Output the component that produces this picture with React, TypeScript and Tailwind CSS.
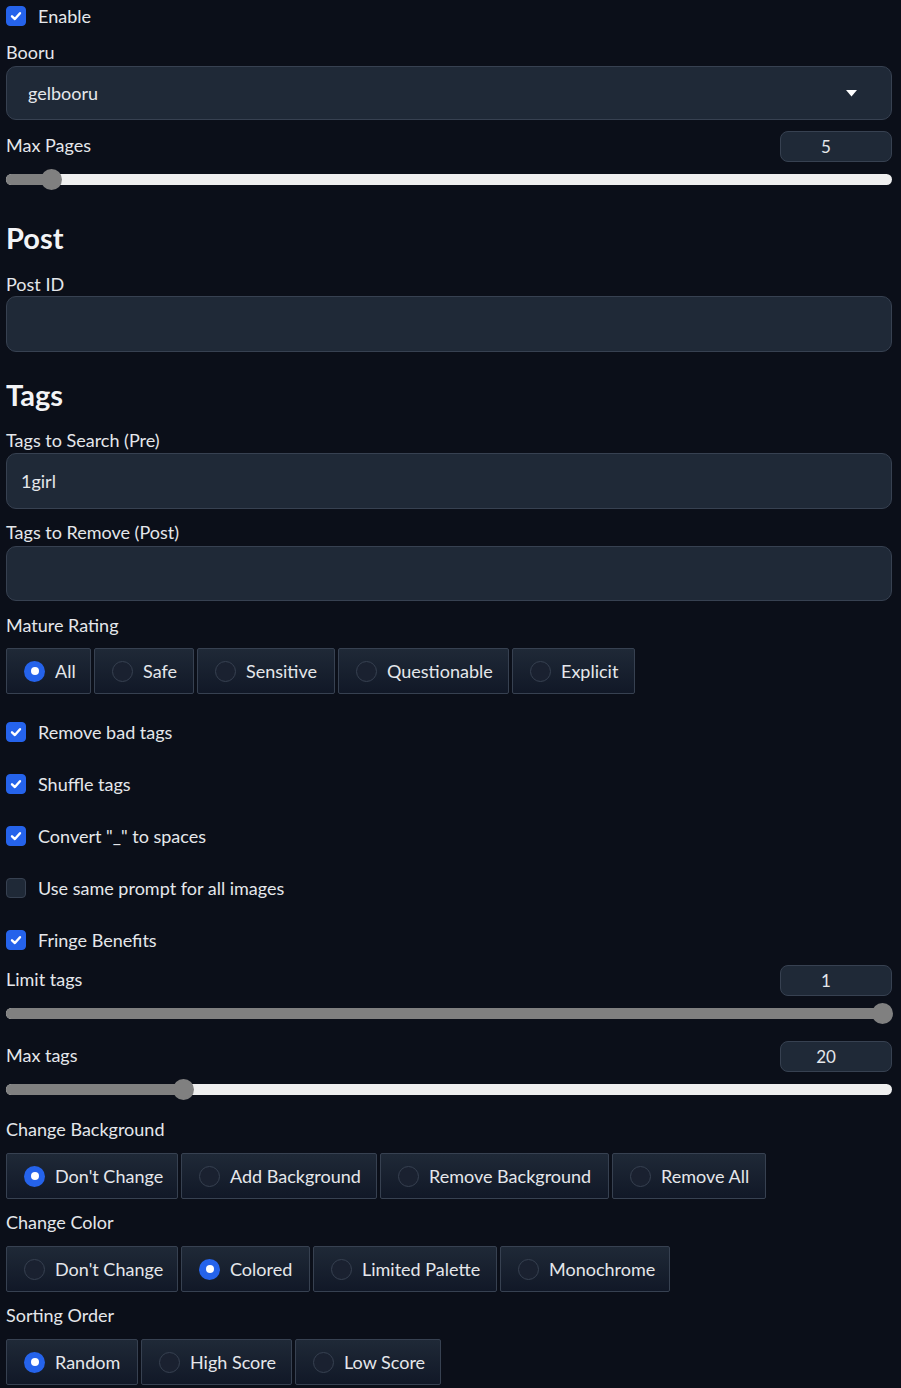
import React from "react";

const font = { fontFamily: "Lato, 'Noto Sans', sans-serif" };

function Check({ checked, label, className = "" }: { checked: boolean; label: string; className?: string }) {
  return (
    <div className={"flex items-center " + className}>
      <div
        className={
          "w-[20px] h-[20px] rounded-[4px] border flex items-center justify-center " +
          (checked ? "bg-[#2563eb] border-[#2563eb]" : "bg-[#1f2937] border-[#374151]")
        }
      >
        {checked && (
          <svg width="14" height="14" viewBox="0 0 14 14">
            <path d="M3 7.3 L5.9 10 L11 4.2" fill="none" stroke="white" strokeWidth="2.4" strokeLinecap="round" strokeLinejoin="round" />
          </svg>
        )}
      </div>
      <span className="ml-[12px] text-[18px] text-[#e5e7eb] leading-[24px]">{label}</span>
    </div>
  );
}

function Label({ children, className = "" }: { children: React.ReactNode; className?: string }) {
  return <div className={"text-[18px] leading-[24px] text-[#e5e7eb] " + className}>{children}</div>;
}

function Slider({ label, value, pos, className = "" }: { label: string; value: string; pos: number; className?: string }) {
  const left = pos - 6;
  return (
    <div className={className}>
      <div className="flex items-center justify-between h-[31px]">
        <Label className="-mt-[4px]">{label}</Label>
        <div className="w-[112px] h-[31px] rounded-[8px] bg-[#1f2937] border border-[#374151] flex items-center justify-center pr-[20px] text-[17px] text-[#e5e7eb]">
          {value}
        </div>
      </div>
      <div className="relative h-[20px] mt-[7px]">
        <div className="absolute left-0 right-0 top-[5px] h-[11px] rounded-full bg-[#efefef] overflow-hidden">
          <div className="h-full bg-[#808080]" style={{ width: left }} />
        </div>
        <div className="absolute top-[0px] w-[21px] h-[21px] rounded-full bg-[#808080]" style={{ left: left - 10 }} />
      </div>
    </div>
  );
}

function Radio({ items, selected, widths, className = "" }: { items: string[]; selected: number; widths: number[]; className?: string }) {
  return (
    <div className={"flex gap-[3px] " + className}>
      {items.map((it, i) => (
        <div
          key={it}
          className="h-[46px] flex items-center pl-[17px] border border-[#374151] rounded-[2px] bg-linear-to-t from-[#111827] to-[#1f2937] shrink-0"
          style={{ width: widths[i] }}
        >
          {i === selected ? (
            <div className="w-[21px] h-[21px] rounded-full bg-[#2563eb] flex items-center justify-center shrink-0">
              <div className="w-[8px] h-[8px] rounded-full bg-white" />
            </div>
          ) : (
            <div className="w-[21px] h-[21px] rounded-full bg-[#1a2130] border border-[#374151] shrink-0" />
          )}
          <span className="ml-[10px] text-[18px] text-[#e5e7eb] whitespace-nowrap">{it}</span>
        </div>
      ))}
    </div>
  );
}

function Input({ text, h = 56, className = "" }: { text?: string; h?: number; className?: string }) {
  return (
    <div
      className={"rounded-[10px] bg-[#1f2937] border border-[#374151] flex items-center pl-[14px] text-[18px] text-[#e5e7eb] " + className}
      style={{ height: h }}
    >
      {text}
    </div>
  );
}

export default function App() {
  return (
    <div className="min-h-[1388px] bg-[#0b0f19] pl-[6px] pr-[9px] pt-[6px] pb-[4px]" style={font}>
      <Check checked label="Enable" className="h-[20px]" />
      <Label className="mt-[14px]">Booru</Label>
      <div className="mt-[2px] h-[54px] rounded-[10px] bg-[#1f2937] border border-[#374151] flex items-center justify-between pl-[21px] pr-[34px] text-[18px] text-[#e5e7eb]">
        <span>gelbooru</span>
        <svg width="11" height="7" viewBox="0 0 11 7">
          <path d="M0 0 L11 0 L5.5 6.5 Z" fill="white" />
        </svg>
      </div>
      <Slider label="Max Pages" value="5" pos={51} className="mt-[11px]" />

      <div className="mt-[31px] text-[29px] leading-[36px] font-bold text-[#f3f4f6]">Post</div>
      <Label className="mt-[16px]">Post ID</Label>
      <Input />

      <div className="mt-[25px] text-[29px] leading-[36px] font-bold text-[#f3f4f6]">Tags</div>
      <Label className="mt-[15px]">Tags to Search (Pre)</Label>
      <Input text="1girl" className="mt-[1px]" />
      <Label className="mt-[11px]">Tags to Remove (Post)</Label>
      <Input className="mt-[2px]" h={55} />
      <Label className="mt-[12px]">Mature Rating</Label>
      <Radio
        className="mt-[11px]"
        items={["All", "Safe", "Sensitive", "Questionable", "Explicit"]}
        selected={0}
        widths={[85, 100, 138, 171, 123]}
      />

      <Check checked label="Remove bad tags" className="mt-[28px] h-[20px]" />
      <Check checked label="Shuffle tags" className="mt-[32px] h-[20px]" />
      <Check checked label={'Convert "_" to spaces'} className="mt-[32px] h-[20px]" />
      <Check checked={false} label="Use same prompt for all images" className="mt-[32px] h-[20px]" />
      <Check checked label="Fringe Benefits" className="mt-[32px] h-[20px]" />

      <Slider label="Limit tags" value="1" pos={882} className="mt-[15px]" />
      <Slider label="Max tags" value="20" pos={183} className="mt-[18px]" />

      <Label className="mt-[18px]">Change Background</Label>
      <Radio
        className="mt-[12px]"
        items={["Don't Change", "Add Background", "Remove Background", "Remove All"]}
        selected={0}
        widths={[172, 196, 229, 154]}
      />
      <Label className="mt-[11px]">Change Color</Label>
      <Radio
        className="mt-[12px]"
        items={["Don't Change", "Colored", "Limited Palette", "Monochrome"]}
        selected={1}
        widths={[172, 129, 184, 170]}
      />
      <Label className="mt-[11px]">Sorting Order</Label>
      <Radio
        className="mt-[12px]"
        items={["Random", "High Score", "Low Score"]}
        selected={0}
        widths={[132, 151, 146]}
      />
    </div>
  );
}
